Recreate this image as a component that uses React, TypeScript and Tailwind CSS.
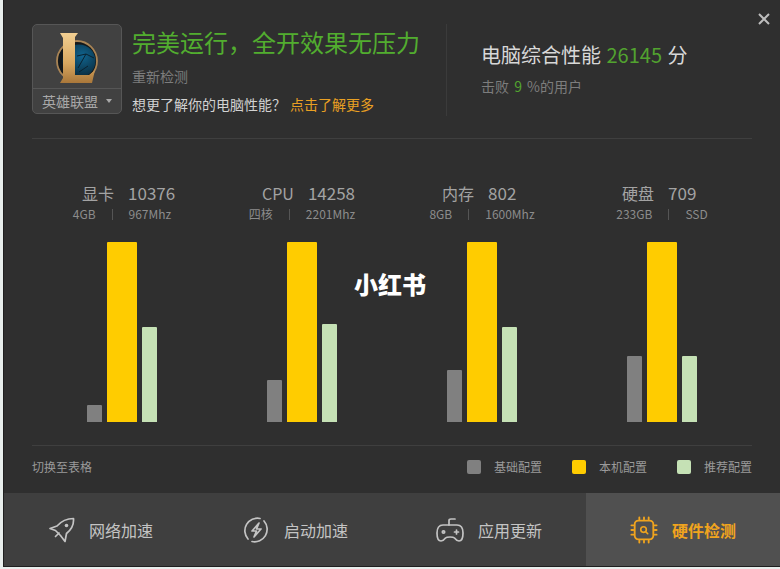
const FONT = "font-['Noto_Sans_CJK_SC','Noto_Sans',sans-serif]";

const CARDS = [
  { name: "显卡", score: "10376", left: "4GB", right: "967Mhz", base: 17, mine: 180, rec: 95 },
  { name: "CPU", score: "14258", left: "四核", right: "2201Mhz", base: 42, mine: 180, rec: 98 },
  { name: "内存", score: "802", left: "8GB", right: "1600Mhz", base: 52, mine: 180, rec: 95 },
  { name: "硬盘", score: "709", left: "233GB", right: "SSD", base: 66, mine: 180, rec: 66 },
];

function Logo() {
  return (
    <svg width="44" height="52" viewBox="0 0 44 52">
      <defs>
        <linearGradient id="gold" x1="0" y1="0" x2="0" y2="1">
          <stop offset="0" stopColor="#f2cf92" />
          <stop offset="0.6" stopColor="#d9a860" />
          <stop offset="1" stopColor="#a9773a" />
        </linearGradient>
        <radialGradient id="blue" cx="0.6" cy="0.35" r="0.7">
          <stop offset="0" stopColor="#10648f" />
          <stop offset="1" stopColor="#0a2635" />
        </radialGradient>
      </defs>
      <circle cx="22" cy="29" r="20" fill="#14181a" stroke="#a98455" strokeWidth="1.800" />
      <circle cx="24" cy="29" r="16.500" fill="url(#blue)" />
      <path d="M23 36l8-14 8 4M22 24l9-2M24 40l9-6" stroke="#0a2230" strokeWidth="1" fill="none" />
      <path d="M5 1h18l-3 4v38h14l6-5-3 13H5l3-5V6z" fill="url(#gold)" />
    </svg>
  );
}

function Rocket() {
  return (
    <svg width="26" height="26" viewBox="0 0 26 26" fill="none" stroke="#c4c4c4" strokeWidth="1.700" strokeLinejoin="round" strokeLinecap="round">
      <path d="M24.500 1.500c.5 6-2 11-7 15l-1.500 8-4.500-6-5-5-5.500-2 7-2.500C12 4.500 18 1.500 24.500 1.500z" />
      <circle cx="17.500" cy="8.500" r="1.800" fill="#c4c4c4" stroke="none" />
      <path d="M6.500 19.500l3.500-3.500" />
    </svg>
  );
}

function Bolt() {
  return (
    <svg width="28" height="28" viewBox="0 0 28 28" fill="none" stroke="#c4c4c4" strokeWidth="1.700" strokeLinejoin="round" strokeLinecap="round">
      <path d="M6 23A12.500 12.500 0 0 1 18 2.500" />
      <path d="M22 5A12.500 12.500 0 0 1 10 25.500" />
      <path d="M17 7l-7 8h4.500l-2.500 6 7-8h-4.500z" />
    </svg>
  );
}

function Gamepad() {
  return (
    <svg width="28" height="26" viewBox="0 0 28 26" fill="none" stroke="#c4c4c4" strokeWidth="1.700" strokeLinejoin="round" strokeLinecap="round">
      <path d="M7 8h14c4 0 6 3 6 8 0 5-1 8-4 8-2 0-3-1-4.500-3-1-1-2-1-4.500-1s-3.500 0-4.500 1C8 23 7 24 5 24c-3 0-4-3-4-8 0-5 2-8 6-8z" />
      <path d="M13 8V3.500C13 2.500 14 2 15 2h4" />
      <circle cx="7.500" cy="15" r="1.200" />
      <path d="M20.500 13v4M18.500 15h4" />
    </svg>
  );
}

function Chip() {
  return (
    <svg width="28" height="28" viewBox="0 0 30 30" fill="none" stroke="#f0a41e" strokeWidth="2" strokeLinecap="round" strokeLinejoin="round">
      <rect x="5" y="5" width="20" height="20" rx="4" />
      <path d="M10 1.500v2M15 1.500v2M20 1.500v2M10 26.500v2M15 26.500v2M20 26.500v2M1.500 10h2M1.500 15h2M1.500 20h2M26.500 10h2M26.500 15h2M26.500 20h2" />
      <circle cx="14.500" cy="14.500" r="3" strokeWidth="1.700" />
      <path d="M17 17l2 2" strokeWidth="1.700" />
    </svg>
  );
}

function Card({ c }: { c: (typeof CARDS)[number] }) {
  return (
    <div className="w-[180px] flex flex-col items-center">
      <div className="w-full pl-[50px] h-[20px] flex items-center gap-[14px] text-[16px] leading-[20px] text-[#a3a3a3]">
        <span>{c.name}</span>
        <span className="text-[17px]">{c.score}</span>
      </div>
      <div className="mt-[3px] h-[16px] flex items-center justify-center text-[12px] leading-[16px] text-[#8c8c8c]">
        <span>{c.left}</span>
        <span className="mx-[16px] w-px h-[11px] bg-[#555]" />
        <span>{c.right}</span>
      </div>
      <div className="mt-[20px] h-[180px] flex items-end gap-[5px]">
        <div className="w-[15px] rounded-t-[1px] bg-[#808080]" style={{ height: c.base }} />
        <div className="w-[30px] rounded-t-[1px] bg-[#ffcc00]" style={{ height: c.mine }} />
        <div className="w-[15px] rounded-t-[1px] bg-[#c5e1b5]" style={{ height: c.rec }} />
      </div>
    </div>
  );
}

function Legend({ color, label }: { color: string; label: string }) {
  return (
    <div className="flex items-center gap-[13px]">
      <span className={`w-[14px] h-[14px] rounded-[2px] ${color}`} />
      <span className="text-[12px] leading-[16px] text-[#9a9a9a] w-[48px]">{label}</span>
    </div>
  );
}

function Tab({ icon, label, active }: { icon: React.ReactNode; label: string; active?: boolean }) {
  return (
    <div className={`flex-1 flex items-center justify-center gap-[14px] ${active ? "bg-[#505050]" : ""}`}>
      {icon}
      <span className={`text-[16px] leading-[20px] ${active ? "text-[#f0a41e] font-bold" : "text-[#c4c4c4]"}`}>{label}</span>
    </div>
  );
}

export default function App() {
  return (
    <div className={`relative w-[780px] h-[569px] bg-[#e8eeec] overflow-hidden ${FONT}`}>
      <div className="ml-[3px] h-[567px] bg-[#2f2f2f] border-l border-b border-[#1f1f1f] flex flex-col">
        <div className="flex-1 px-[28px] flex flex-col">
          {/* header */}
          <div className="h-[114px] pt-[24px] flex">
            <div className="w-[90px] h-[90px] rounded-[5px] border border-[#565656] bg-[#414141] flex flex-col">
              <div className="flex-1 flex items-center justify-center pt-[2px]">
                <Logo />
              </div>
              <div className="h-[25px] border-t border-[#565656] flex items-center justify-center gap-[8px]">
                <span className="text-[14px] leading-[16px] text-[#a8a8a8]">英雄联盟</span>
                <span className="w-0 h-0 border-x-[3px] border-x-transparent border-t-[4px] border-t-[#a8a8a8]" />
              </div>
            </div>
            <div className="ml-[10px] w-[314px]">
              <div className="h-[36px] text-[24px] leading-[36px] text-[#52ad2f]">完美运行，全开效果无压力</div>
              <div className="mt-[7px] text-[14px] leading-[18px] text-[#7d7d7d]">重新检测</div>
              <div className="mt-[10px] text-[14px] leading-[18px] text-[#d2d2d2]">
                想更了解你的电脑性能？<span className="ml-[4px] text-[#e9a023]">点击了解更多</span>
              </div>
            </div>
            <div className="w-px h-[92px] bg-[#3b3b3b]" />
            <div className="ml-[34px] pt-[16px]">
              <div className="text-[20px] leading-[30px] text-[#d8d8d8]">
                电脑综合性能 <span className="ml-[1px] mr-[1px] text-[#52a32f]">26145</span> 分
              </div>
              <div className="mt-[7px] text-[14px] leading-[18px] text-[#7d7d7d]">
                击败 <span className="mx-[2px] text-[#52a32f]">9</span> %的用户
              </div>
            </div>
          </div>
          <div className="h-px mt-[24px] bg-[#3f3f3f] w-[720px]" />

          {/* cards */}
          <div className="mt-[44px] flex">
            {CARDS.map((c) => (
              <Card key={c.name} c={c} />
            ))}
          </div>
          <div className="h-px mt-[23px] bg-[#3f3f3f] w-[720px]" />

          {/* legend */}
          <div className="w-[720px] h-[42px] flex items-center justify-between">
            <span className="text-[12px] leading-[16px] text-[#9a9a9a]">切换至表格</span>
            <div className="flex gap-[30px]">
              <Legend color="bg-[#808080]" label="基础配置" />
              <Legend color="bg-[#ffcc00]" label="本机配置" />
              <Legend color="bg-[#c5e1b5]" label="推荐配置" />
            </div>
          </div>
        </div>

        {/* bottom tabs */}
        <div className="h-[73px] bg-[#3f3f3f] flex">
          <Tab icon={<Rocket />} label="网络加速" />
          <Tab icon={<Bolt />} label="启动加速" />
          <Tab icon={<Gamepad />} label="应用更新" />
          <Tab icon={<Chip />} label="硬件检测" active />
        </div>
      </div>

      {/* close */}
      <svg className="absolute left-[758px] top-[13px]" width="12" height="12" viewBox="0 0 12 12" stroke="#bdbdbd" strokeWidth="2">
        <path d="M1 1l10 10M11 1L1 11" />
      </svg>

      {/* watermark */}
      <div className="absolute left-[354px] top-[268px] text-[24px] leading-[32px] font-black text-white">小红书</div>
    </div>
  );
}
